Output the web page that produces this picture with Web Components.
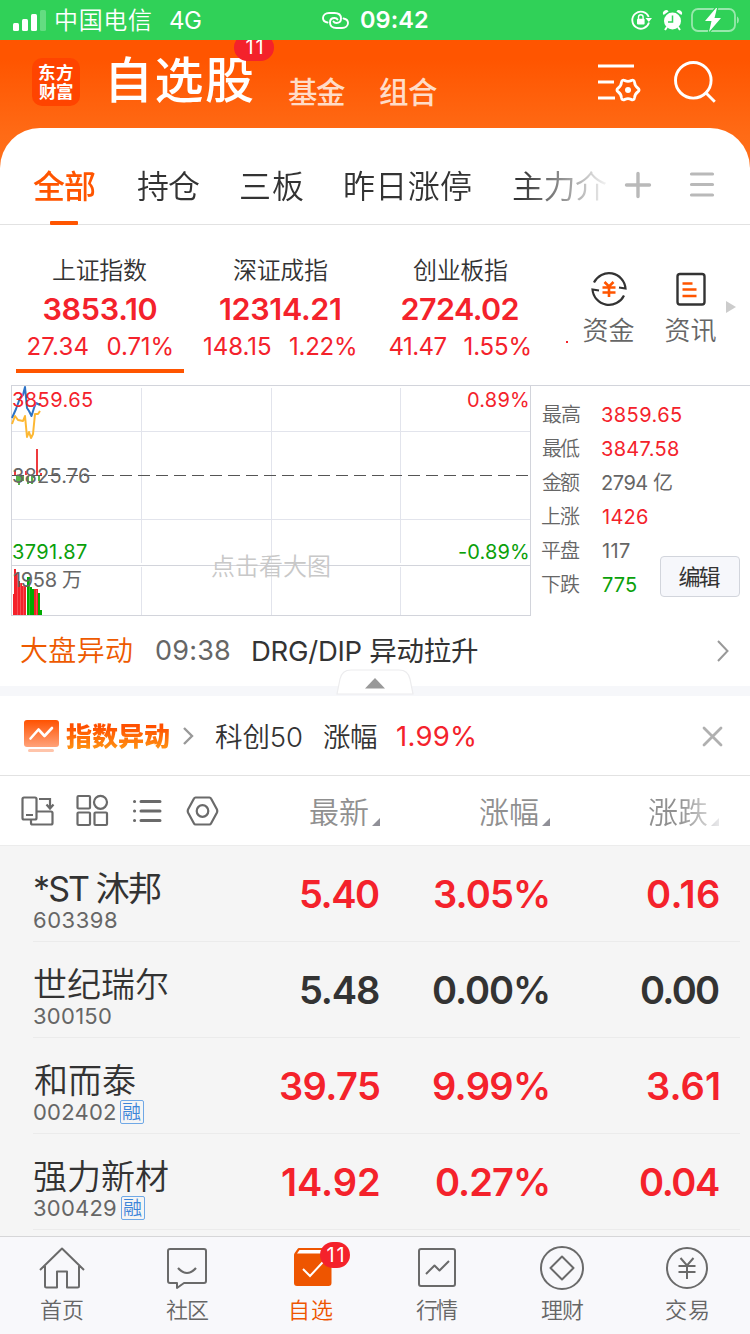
<!DOCTYPE html>
<html lang="zh-CN">
<head>
<meta charset="utf-8">
<meta name="viewport" content="width=device-width">
<title>自选股</title>
<style>
html,body{margin:0;padding:0;background:#fff}
body{width:750px;height:1334px;overflow:hidden;font-family:Inter,"Noto Sans CJK SC",sans-serif;color:#333}
</style>
</head>
<body>
<stock-app></stock-app>
<script>
const define = (name, css, html, init) => {
  const t = document.createElement('template');
  t.innerHTML = `<style>*{box-sizing:border-box}svg{display:block;flex:none;overflow:visible}${css}</style>${html}`;
  customElements.define(name, class extends HTMLElement {
    connectedCallback() {
      if (this.shadowRoot) return;
      this.attachShadow({mode: 'open'}).appendChild(t.content.cloneNode(true));
      if (init) init.call(this, this.shadowRoot);
    }
  });
};

/* Text whose box is its ink: s = size, w = ink width, b = weight, c = colour */
const pen = document.createElement('canvas').getContext('2d');
define('ink-text', `:host{display:block;flex:none;white-space:nowrap;line-height:1.2}span{display:block}`,
  `<span><slot></slot></span>`, function (root) {
    const text = this.textContent, span = root.querySelector('span');
    const cjk = /[\u4e00-\u9fff]/.test(text);
    const s = +this.getAttribute('s'), w = +this.getAttribute('w');
    const b = this.getAttribute('b') || (cjk ? 350 : 400);
    pen.font = `${b} ${s}px Inter, "Noto Sans CJK SC", sans-serif`;
    const m = pen.measureText(text);
    const ink = m.actualBoundingBoxLeft + m.actualBoundingBoxRight;
    this.style.width = w + 'px';
    if (cjk) this.style.transform = 'translateY(1px)';
    span.style.cssText = `font-size:${s}px;font-weight:${b};margin-left:${m.actualBoundingBoxLeft}px;` +
      `letter-spacing:${(w - ink) / Math.max(1, [...text].length - 1)}px`;
    if (this.hasAttribute('c')) this.style.color = this.getAttribute('c');
  });

define('status-bar', `
:host{display:flex;align-items:center;height:40px;background:#30d158;color:#fff;position:relative;z-index:1}
`, `
<svg style="margin-left:13px" width="33" height="22" viewBox="0 0 33 22" fill="#fff"><rect y="14" width="6" height="8" rx="1.5"/><rect x="9" y="10" width="6" height="12" rx="1.5"/><rect x="18" y="5" width="6" height="17" rx="1.5"/><rect x="27" y="1" width="6" height="21" rx="1.5" opacity=".25"/></svg>
<ink-text s="24" w="95" style="margin:1px 0 0 10px">中国电信</ink-text>
<ink-text s="24" w="31" style="margin:2px 0 0 19px">4G</ink-text>
<svg style="margin-left:121px" width="27" height="17" viewBox="0 0 27 17" fill="none" stroke="#fff" stroke-width="1.9" stroke-linecap="round"><path d="M5.500 10.500C2.500 10 1 8.500 1 6c0-3 2.500-5 6-5h5.500c4 0 6.500 2 6.500 5.500 0 3-2 4.500-4.500 4.500-1.500 0-2.500-.5-3-1.500"/><path d="M21.500 6.500c3 .5 4.500 2 4.500 4.500 0 3-2.500 5-6 5h-5.500c-4 0-6.500-2-6.500-5.500 0-3 2-4.500 4.500-4.500 1.500 0 2.500.5 3 1.500"/></svg>
<ink-text s="23.5" w="67" b="600" style="margin:1px 0 0 12px">09:42</ink-text>
<svg style="margin-left:203px" width="21" height="20" viewBox="0 0 21 20"><path d="M18 12.500a8.500 8.500 0 1 1-.3-5.500" fill="none" stroke="#fff" stroke-width="1.8"/><path d="M14.500 8h6.500l-3.200 4z" fill="#fff"/><rect x="6" y="8.8" width="7.600" height="5.700" rx="1" fill="#fff"/><path d="M7.500 9V7a2.300 2.300 0 0 1 4.600 0v2" fill="none" stroke="#fff" stroke-width="1.400"/></svg>
<svg style="margin-left:11px" width="19" height="21" viewBox="0 0 19 21" fill="#fff"><circle cx="9.500" cy="11" r="8.500"/><path d="M0.600 5a3 3 0 0 1 5-3.600zM18.400 5a3 3 0 0 0-5-3.600z"/><path d="M4 17l-2 3M15 17l2 3" stroke="#fff" stroke-width="2"/><path d="M9.500 5.500V12H5" fill="none" stroke="#30d158" stroke-width="1.500"/></svg>
<svg style="margin-left:9px" width="46" height="24" viewBox="0 0 46 24"><rect x="1" y="1" width="43" height="22" rx="6" fill="none" stroke="#fff" stroke-opacity=".5" stroke-width="1.800"/><path d="M46 8.500c2.500 1 2.500 6 0 7z" fill="#fff" fill-opacity=".5"/><path d="M25 0L14 13h6.500l-2.500 11L30 10h-6.500L26 0z" fill="#fff" stroke="#30d158" stroke-width="2.500" paint-order="stroke"/></svg>
`);

define('app-header', `
:host{display:flex;height:128px;background:linear-gradient(#ff5500 15%,#ff6b16 75%,#ff6f1a);position:relative;padding-left:32px;align-items:flex-start;color:#fff;margin-bottom:-40px;overflow:hidden}
.logo{width:48px;height:48px;border-radius:10px;background:#ff4400;margin-top:18px;padding:3px 0 0 7px;flex:none}
.logo ink-text{line-height:19px}
.badge{position:absolute;left:234px;top:-6px;width:40px;height:27px;border-radius:13.5px;background:#f4222b;display:flex;justify-content:center;align-items:center}
.dim{color:#ffdcc8;line-height:34px;margin-top:34px}
`, `
<div class="logo"><ink-text s="17.5" w="34" b="700" style="margin-top:1px">东方</ink-text><ink-text s="17.5" w="34" b="700">财富</ink-text></div>
<ink-text s="49" w="142" b="500" style="margin:11px 0 0 31px">自选股</ink-text>
<ink-text class="dim" s="29.5" w="57" b="500" style="margin-left:35px">基金</ink-text>
<ink-text class="dim" s="29.5" w="57" b="500" style="margin-left:35px">组合</ink-text>
<svg style="margin:24px 0 0 161px" width="42" height="40" viewBox="0 0 42 40" fill="none" stroke="#fff" stroke-width="3"><path d="M0 2h36M0 18h16M0 34h17"/><path transform="translate(30 26)" stroke-linejoin="round" stroke-width="2.800" d="M9.700 2Q6.900 4 6.600 7.400Q6.200 10.800 3.100 9.400Q0 8-3.100 9.400Q-6.200 10.800-6.600 7.400Q-6.900 4-9.700 2Q-12.500 0-9.700-2Q-6.900-4-6.600-7.400Q-6.200-10.800-3.100-9.400Q0-8 3.100-9.400Q6.200-10.800 6.600-7.400Q6.900-4 9.700-2Q12.500 0 9.700 2z"/><circle cx="30" cy="26" r="3" fill="#fff" stroke="none"/></svg>
<svg style="margin:21px 0 0 34px" width="42" height="42" viewBox="0 0 42 42" fill="none" stroke="#fff" stroke-width="2.900"><circle cx="19.300" cy="19.300" r="17.800"/><path d="M31.800 31.800l9 9"/></svg>
<div class="badge"><ink-text s="20" w="17" style="margin-top:-2px">11</ink-text></div>
`);

define('tab-strip', `
:host{display:flex;height:97px;background:#fff;border-radius:40px 40px 0 0;border-bottom:1px solid #e2e2e2;position:relative;align-items:center;padding-bottom:0}
.tabs{display:flex;gap:42px;padding-left:33px;width:608px;overflow:hidden;flex:none;-webkit-mask:linear-gradient(90deg,#000 520px,transparent 612px);mask:linear-gradient(90deg,#000 520px,transparent 612px);margin-top:20px}
ink-text{line-height:44px}
i{position:absolute;left:50px;bottom:-1px;width:28px;height:4px;border-radius:1px;background:#ff5500}
`, `
<div class="tabs"><ink-text s="32" w="62" b="500" c="#ff5500">全部</ink-text><ink-text s="32" w="62">持仓</ink-text><ink-text s="32" w="62">三板</ink-text><ink-text s="32" w="126">昨日涨停</ink-text><ink-text s="32" w="94">主力介</ink-text></div>
<svg style="margin:17px 0 0 17px" width="26" height="26" viewBox="0 0 26 26" stroke="#b9b9b9" stroke-width="3.400" stroke-linecap="round"><path d="M1.500 13h23M13 1.500v23"/></svg>
<svg style="margin:17px 0 0 39px" width="24" height="25" viewBox="0 0 24 25" stroke="#b9b9b9" stroke-width="3.200" stroke-linecap="round"><path d="M1.500 2h21M1.500 12.500h21M1.500 23h21"/></svg>
<i></i>
`);

define('index-card', `
:host{display:flex;flex-direction:column;align-items:center;width:180px;height:148px;padding-top:28px;flex:none}
:host([on]){background:linear-gradient(#ff5500,#ff5500) center bottom/168px 4px no-repeat}
.n{height:34px;line-height:34px}.v{height:44px;line-height:44px;color:#f4222b}
.c{display:flex;color:#f4222b;line-height:32px;margin-left:-1px}
.c ink-text{line-height:inherit}
`, `<div class="n"></div><div class="v"></div><div class="c"></div>`, function (root) {
  const [n, nw, v, vw, a, aw, gap, p, pw] = this.getAttribute('data').split(',');
  const lh = 'style="line-height:inherit"';
  root.querySelector('.n').innerHTML = `<ink-text ${lh} s="24" w="${nw}">${n}</ink-text>`;
  root.querySelector('.v').innerHTML = `<ink-text ${lh} s="30.500" w="${vw}" b="600">${v}</ink-text>`;
  root.querySelector('.c').innerHTML = `<ink-text s="24" w="${aw}">${a}</ink-text><ink-text s="24" w="${pw}" style="margin-left:${gap}px">${p}</ink-text>`;
});

define('index-bar', `
:host{display:flex;height:160px;padding-left:10px;background:#fff}
.q{display:flex;flex-direction:column;align-items:center;width:52px;color:#666;padding-top:46px}
.q ink-text{line-height:36px;margin-top:5px}
.clip{width:2px;height:2px;margin:116px 0 0 16px;background:#f4222b}
`, `
<index-card on data="上证指数,94,3853.10,113,27.34,61,19,0.71%,64"></index-card>
<index-card data="深证成指,94,12314.21,120,148.15,67,19,1.22%,65"></index-card>
<index-card data="创业板指,94,2724.02,117,41.47,57,18,1.55%,65"></index-card>
<div class="clip"></div>
<div class="q" style="margin-left:15px"><svg width="36" height="36" viewBox="0 0 36 36" fill="none" stroke="#333" stroke-width="2.200"><path d="M3 11.500A16.600 16.600 0 0 1 34.500 17.500L28 16.500M33 24.500A16.600 16.600 0 0 1 1.500 18.500L8 19.500"/><g stroke="#ff5500" stroke-width="2.600"><path d="M13.500 11l4.500 4.500 4.500-4.500M11.500 16.500h13M11.500 21.500h13M18 15v11"/></g></svg><ink-text s="26" w="51">资金</ink-text></div>
<div class="q" style="margin-left:30px"><svg width="30" height="36" viewBox="0 0 30 36" fill="none" stroke="#333" stroke-width="2.400"><rect x="1.500" y="3" width="27" height="30.500" rx="2.500"/><g stroke="#ff5500" stroke-width="2.600"><path d="M6.500 12.500h10M6.500 18.500h14M6.500 25h14"/></g></svg><ink-text s="26" w="51">资讯</ink-text></div>
<svg style="margin:76px 0 0 9px" width="10" height="12" viewBox="0 0 10 12"><path d="M0 0l10 6-10 6z" fill="#ccc"/></svg>
`);

define('minute-chart', `
:host{display:block;position:relative;width:531px;height:231px;flex:none}
svg{position:absolute;inset:0}
ink-text{position:absolute;line-height:24px}
`, `
<svg width="531" height="231" viewBox="0 385 531 231" fill="none" shape-rendering="crispEdges">
<path d="M141.500 388v175M271.500 388v175M400.500 388v175M141.500 567v48M271.500 567v48M400.500 567v48M12 431.500h518M12 519.500h518" stroke="#e2e4ec"/>
<path d="M11.500 385.500h519v230h-519zM12 565.500h518" stroke="#d2d4db"/>
<path d="M12 475.500h517" stroke="#555" stroke-dasharray="12 6"/>
<g stroke="#ee3a3e" stroke-width="2"><path d="M15 475v-5M26 475v-4M37 475v-26M41 475v-2"/></g>
<g stroke="#5ab54a" stroke-width="2"><path d="M17 476v6M19 476v9M21 476v6M23 476v5M28 476v8M32 476v8M34 476v2M39 476v5"/></g>
<path d="M13 615v-21h1v-25h2v4h2v8h2v2h2v3h4v29z" fill="#f4222b"/>
<path d="M27 615v-38h3v10h2v2h2v26z" fill="#0a0"/>
<path d="M34 615v-26h4v26z" fill="#f4222b"/>
<path d="M38 615v-22h2v17h2v5z" fill="#0a0"/>
<path d="M17.500 574v41M20.500 582v33M23.500 585v30M29.500 580v35M36.500 590v25" stroke="#fff" stroke-opacity=".2"/>
<g shape-rendering="auto" stroke-width="2" stroke-linejoin="round"><path stroke="#2d73c6" d="M12 418l4-9 4-11 3-3 2-8 2 21 2 3 2.500 5 2.500-8 2-5 4 2"/><path stroke="#fdb833" d="M12 424l3-8 3 4 5 1 2-5 2 21 2-5 2 6 2-4 2-20h3l2-3"/></g>
</svg>
<ink-text s="20" w="79" c="#f4222b" style="left:13px;top:2.500px">3859.65</ink-text>
<ink-text s="20" w="77" c="#666" style="left:13px;top:78.500px">3825.76</ink-text>
<ink-text s="20" w="74" c="#0aa00a" style="left:13px;top:154.500px">3791.87</ink-text>
<ink-text s="20" w="68" b="400" c="#666" style="left:13px;top:182px">1958 万</ink-text>
<ink-text s="20" w="60" c="#f4222b" style="left:468px;top:2.500px">0.89%</ink-text>
<ink-text s="20" w="69" c="#0aa00a" style="left:459px;top:154.500px">-0.89%</ink-text>
<ink-text s="24" w="117" c="#c8c8c8" style="left:212px;top:169px">点击看大图</ink-text>
`);

define('market-panel', `
:host{display:flex;height:231px;position:relative;background:#fff}
.stats{flex:1;border-top:1px solid #d2d4db;padding:11px 0 0 11px}
.stats div{display:flex;height:34px;align-items:center;gap:22px}
.num{margin-top:1px}
.mix{margin-top:-1px}
button{all:unset;box-sizing:border-box;position:absolute;left:660px;top:171px;width:80px;height:41px;border:1px solid #d2d5dc;border-radius:4px;background:#f6f7fb;display:flex;align-items:center;justify-content:center;font-family:inherit}
`, `
<minute-chart></minute-chart>
<div class="stats"></div>
<button><ink-text s="22" w="42" c="#333" b="400" style="margin-right:1px">编辑</ink-text></button>
`, function (root) {
  root.querySelector('.stats').innerHTML = [
    ['最高', '3859.65', 79, '#f4222b'], ['最低', '3847.58', 77, '#f4222b'], ['金额', '2794 亿', 70, '#666'],
    ['上涨', '1426', 46, '#f4222b'], ['平盘', '117', 28, '#666'], ['下跌', '775', 34, '#0aa00a']
  ].map(([l, v, w, c]) => `<div><ink-text s="20" w="38" c="#666">${l}</ink-text><ink-text class="${v.includes(' ') ? 'mix' : 'num'}" s="20" b="400" w="${w}" c="${c}">${v}</ink-text></div>`).join('');
});

define('news-line', `
:host{display:flex;height:80px;border-bottom:10px solid #f6f7fa;background:#fff;align-items:center;padding-left:21px;position:relative}
.handle{position:absolute;left:336px;top:52px}
`, `
<ink-text s="28" w="111" c="#ee5a00">大盘异动</ink-text>
<ink-text s="27" w="74" c="#666" style="margin:1px 0 0 24px">09:38</ink-text>
<ink-text s="27.500" w="225" b="400" style="margin:-2px 0 0 23px">DRG/DIP 异动拉升</ink-text>
<svg style="margin:-1px 0 0 239px" width="12" height="22" viewBox="0 0 12 22" fill="none" stroke="#999" stroke-width="2"><path d="M1 1l9.500 10L1 21"/></svg>
<svg class="handle" width="78" height="28" viewBox="0 0 78 28"><path d="M1 26L4 11Q6 2 15 2H63Q72 2 74 11L77 26z" fill="#fff" stroke="#ececee" stroke-width="1.200"/><path d="M29 20.500L39 10l10 10.500z" fill="#999"/></svg>
`);

define('alert-banner', `
:host{display:flex;height:80px;border-bottom:1px solid #e2e2e2;background:#fff;align-items:center;padding:2px 0 0 24px}
.g{background:linear-gradient(#ff5000 20%,#ff9212 90%);-webkit-background-clip:text;background-clip:text;color:transparent}
`, `
<svg style="margin-top:-2px" width="35" height="32" viewBox="0 0 35 32"><defs><linearGradient id="g" x2="0" y2="1"><stop stop-color="#ff5200"/><stop offset="1" stop-color="#ffa27a"/></linearGradient></defs><rect width="35" height="27" rx="3" fill="url(#g)"/><rect x="4" y="29" width="26" height="3" rx="1.500" fill="#ffc4aa"/><path d="M6.500 18.500l8-9 6 6.500L28 8" fill="none" stroke="#fff" stroke-width="2.600" stroke-linecap="round" stroke-linejoin="round"/></svg>
<ink-text class="g" s="26" w="103" b="900" style="margin:-2px 0 0 7px">指数异动</ink-text>
<svg style="margin:-1px 0 0 14px" width="11" height="18" viewBox="0 0 11 18" fill="none" stroke="#999" stroke-width="2.400"><path d="M1 1l8 8-8 8"/></svg>
<ink-text s="27.500" w="87" style="margin:-1px 0 0 21px">科创50</ink-text>
<ink-text s="27.500" w="54" style="margin:-1px 0 0 21px">涨幅</ink-text>
<ink-text s="27.500" w="77" c="#f4222b" style="margin-left:20px">1.99%</ink-text>
<svg style="margin-left:229px" width="19" height="19" viewBox="0 0 19 19" stroke="#b0b0b0" stroke-width="2.800" stroke-linecap="round"><path d="M1 1l17 17M18 1L1 18"/></svg>
`);

define('column-head', `
:host{display:flex;height:70px;border-bottom:1px solid #ececec;background:#fff;align-items:center;padding:0 0 0 21px;color:#909090}
.fade{display:flex;align-items:center;-webkit-mask:linear-gradient(90deg,#000 30px,transparent 80px);mask:linear-gradient(90deg,#000 30px,transparent 80px)}
.t{margin:22px 0 0 4px}
ink-text{line-height:40px;margin-top:1px}
`, `
<svg width="33" height="30" viewBox="0 0 33 30" fill="none" stroke="#6a6a6a" stroke-width="2.200"><rect x="1.500" y="1.500" width="14" height="22" rx="1.500"/><path d="M5 19h7M18 3h11v9M25.500 8.500l3.500 4 3.500-4M16 15.500h14a1.500 1.500 0 0 1 1.500 1.500v10a1.500 1.500 0 0 1-1.500 1.500H11.500A1.500 1.500 0 0 1 10 27v-3"/></svg>
<svg style="margin-left:22px" width="31" height="31" viewBox="0 0 31 31" fill="none" stroke="#6a6a6a" stroke-width="2.200"><rect x="1.500" y="1" width="12.500" height="12.500" rx="1"/><circle cx="24.500" cy="7.300" r="6.500"/><rect x="1.500" y="17.500" width="12.500" height="12.500" rx="1"/><rect x="18.500" y="17.500" width="12.500" height="12.500" rx="1"/></svg>
<svg style="margin-left:26px" width="28" height="24" viewBox="0 0 28 24" fill="none" stroke="#6a6a6a" stroke-width="3" stroke-linecap="round"><path d="M1.500 2.500h.1M1.500 12h.1M1.500 21.500h.1M8 2.500h19M8 12h19M8 21.500h19"/></svg>
<svg style="margin-left:26px" width="31" height="30" viewBox="0 0 31 30" fill="none" stroke="#6a6a6a" stroke-width="2.200" stroke-linejoin="round"><path d="M8.500 1.500h14q1 0 1.500 1l6 11q.6 1.500 0 3l-6 11q-.5 1-1.500 1h-14q-1 0-1.500-1l-6-11q-.6-1.500 0-3l6-11q.5-1 1.500-1z"/><circle cx="15.500" cy="15" r="5.800"/></svg>
<ink-text s="30" w="58" style="margin-left:92px">最新</ink-text>
<svg class="t" width="8" height="8"><path d="M8 0v8H0z" fill="#909098"/></svg>
<ink-text s="30" w="58" style="margin-left:100px">涨幅</ink-text>
<svg class="t" width="8" height="8"><path d="M8 0v8H0z" fill="#909098"/></svg>
<div class="fade" style="margin-left:99px"><ink-text s="30" w="58">涨跌</ink-text><svg class="t" width="8" height="8"><path d="M8 0v8H0z" fill="#909098"/></svg></div>
`);

define('stock-row', `
:host{display:grid;grid-template-columns:190px 155px 169px 171px;height:96px;padding-left:34px;background:linear-gradient(#ebebeb,#ebebeb) 33px 95px/707px 1px no-repeat #f5f5f5}
.name{line-height:44px;margin-top:20px}
.sub{display:flex;align-items:center;height:24px;margin-top:-2px;color:#666}
.sub ink-text{line-height:24px}
.v{justify-self:end;line-height:46px;margin-top:25px}
.tag{width:24px;height:24px;border:1px solid #6fa8e6;border-radius:2px;display:flex;align-items:center;justify-content:center;margin-left:5px}
`, ``, function (root) {
  const [n, nw, code, cw, a, aw, b, bw, d, dw, tag] = this.getAttribute('data').split(',');
  const c = this.getAttribute('tone') === 'flat' ? '#333' : '#f4222b';
  const v = (t, w) => `<ink-text class="v" s="38" b="600" w="${w}" c="${c}">${t}</ink-text>`;
  root.innerHTML += `<div><ink-text class="name" s="34" ${n[0] === '*' ? 'b="400"' : ''} w="${nw}">${n}</ink-text><div class="sub"><ink-text s="22" w="${cw}">${code}</ink-text>${tag ? '<div class="tag"><ink-text s="19" w="18" c="#3d85d9">融</ink-text></div>' : ''}</div></div>${v(a, aw)}${v(b, bw)}${v(d, dw)}`;
});

define('nav-item', `
:host{display:flex;flex-direction:column;align-items:center;width:125px;color:#666;position:relative;padding:7px 1px 0 0}
:host([on]){color:#ee5500}
.icon{height:48px;display:flex;align-items:center;color:#6a6a6a}
ink-text{line-height:30px;margin-top:2px}
.badge{position:absolute;left:70px;top:5px;width:30px;height:26px;border-radius:13px;background:#f4222b;color:#fff;display:flex;justify-content:center;align-items:center}
.badge ink-text{margin:0}
`, `<div class="icon"><slot></slot></div>`, function (root) {
  const n = this.getAttribute('badge');
  root.innerHTML += `<ink-text s="22" w="42">${this.getAttribute('label')}</ink-text>${n ? `<div class="badge"><ink-text s="20" w="17">${n}</ink-text></div>` : ''}`;
});

define('bottom-nav', `
:host{display:flex;height:98px;background:#f8f8fb;border-top:1px solid #d6d6d8;position:relative;flex:none}
svg{stroke:#6a6a6a;fill:none;stroke-width:2}
`, `
<nav-item label="首页"><svg width="46" height="42" viewBox="0 0 46 42" stroke-linejoin="round"><path d="M1 23L23 1.500 45 23M6 19v20q0 1.500 1.500 1.500H18V24.500h10v16h10.500q1.500 0 1.500-1.500V19"/></svg></nav-item>
<nav-item label="社区"><svg width="40" height="42" viewBox="0 0 40 42" stroke-linejoin="round"><path d="M3 2h34q2 0 2 2v30q0 2-2 2H17l-7 5v-5H3q-2 0-2-2V4q0-2 2-2z"/><path d="M11 21q9 10 18 0" stroke-width="2.200"/></svg></nav-item>
<nav-item on label="自选" badge="11"><svg style="stroke:none" width="39" height="42" viewBox="0 0 39 42"><path d="M6 1h31q1.500 0 1.500 1.500V36q0 3-3 3H4q-3 0-3-3V8q0-1.500 1-2.500L4.500 2Q5 1 6 1z" fill="#ee5500"/><path d="M6.500 3H33l-3 3.500H4z" fill="#fff"/><path d="M10 22l7 7 13-14" fill="none" stroke="#fff" stroke-width="2"/></svg></nav-item>
<nav-item label="行情"><svg width="38" height="42" viewBox="0 0 38 42" stroke-linejoin="round"><rect x="1" y="2" width="36" height="37" rx="2"/><path d="M8 27l8.500-8.500 5 5L31 14"/></svg></nav-item>
<nav-item label="理财"><svg width="44" height="44" viewBox="0 0 44 44" stroke-linejoin="round"><circle cx="22" cy="22" r="21"/><path d="M22 10.500L33.500 22 22 33.500 10.500 22z"/></svg></nav-item>
<nav-item label="交易"><svg width="42" height="42" viewBox="0 0 42 42"><circle cx="21" cy="21" r="20"/><path d="M14.500 11l6.500 7.500 6.500-7.500M12.500 19h17M12.500 25h17M21 18v14"/></svg></nav-item>
`);

define('stock-app', `
:host{display:flex;flex-direction:column;width:750px;height:1334px;background:#f5f5f5;overflow:hidden}
:host>*{flex:none}
main{height:390px;overflow:hidden}
`, `
<status-bar></status-bar><app-header></app-header><tab-strip></tab-strip><index-bar></index-bar>
<market-panel></market-panel><news-line></news-line><alert-banner></alert-banner><column-head></column-head>
<main>
<stock-row data="*ST 沐邦,127,603398,83,5.40,78,3.05%,114,0.16,72"></stock-row>
<stock-row tone="flat" data="世纪瑞尔,134,300150,77,5.48,78,0.00%,115,0.00,78"></stock-row>
<stock-row data="和而泰,101,002402,81,39.75,99,9.99%,115,3.61,72,1"></stock-row>
<stock-row data="强力新材,134,300429,82,14.92,97,0.27%,112,0.04,79,1"></stock-row>
</main>
<bottom-nav></bottom-nav>
`);
</script>
</body>
</html>
